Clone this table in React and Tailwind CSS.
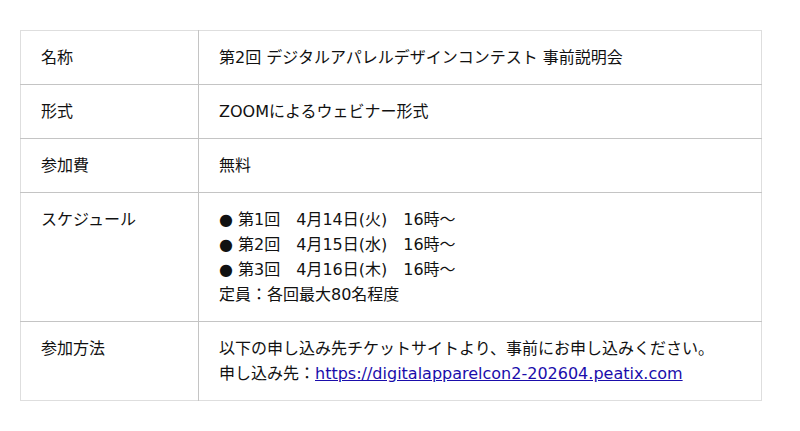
const rows = [
  { label: "名称", body: ["第2回 デジタルアパレルデザインコンテスト 事前説明会"] },
  { label: "形式", body: ["ZOOMによるウェビナー形式"] },
  { label: "参加費", body: ["無料"] },
  {
    label: "スケジュール",
    body: [
      "● 第1回　4月14日(火)　16時～",
      "● 第2回　4月15日(水)　16時～",
      "● 第3回　4月16日(木)　16時～",
      "定員：各回最大80名程度",
    ],
  },
];

export default function App() {
  return (
    <div
      className="min-h-[431px] bg-white pt-[30px] pl-5 text-[16px] leading-[25px] text-[#111]"
      style={{ fontFamily: '"DejaVu Sans", "Noto Sans CJK JP", sans-serif' }}
    >
      <table className="w-[742px] border-collapse border border-[#dedede]">
        <tbody>
          {rows.map((r) => (
            <tr key={r.label} className="border-b border-[#c4c4c4]">
              <td className="w-[178px] border-r border-[#c4c4c4] px-5 py-[14px] align-top">{r.label}</td>
              <td className="px-5 py-[14px] align-top">
                {r.body.map((line) => (
                  <div key={line}>{line}</div>
                ))}
              </td>
            </tr>
          ))}
          <tr>
            <td className="w-[178px] border-r border-[#c4c4c4] px-5 py-[14px] align-top">参加方法</td>
            <td className="px-5 py-[14px] align-top">
              <div>以下の申し込み先チケットサイトより、事前にお申し込みください。</div>
              <div>
                申し込み先：
                <a href="#" className="text-[#1a0dab] underline">
                  https://digitalapparelcon2-202604.peatix.com
                </a>
              </div>
            </td>
          </tr>
        </tbody>
      </table>
    </div>
  );
}
